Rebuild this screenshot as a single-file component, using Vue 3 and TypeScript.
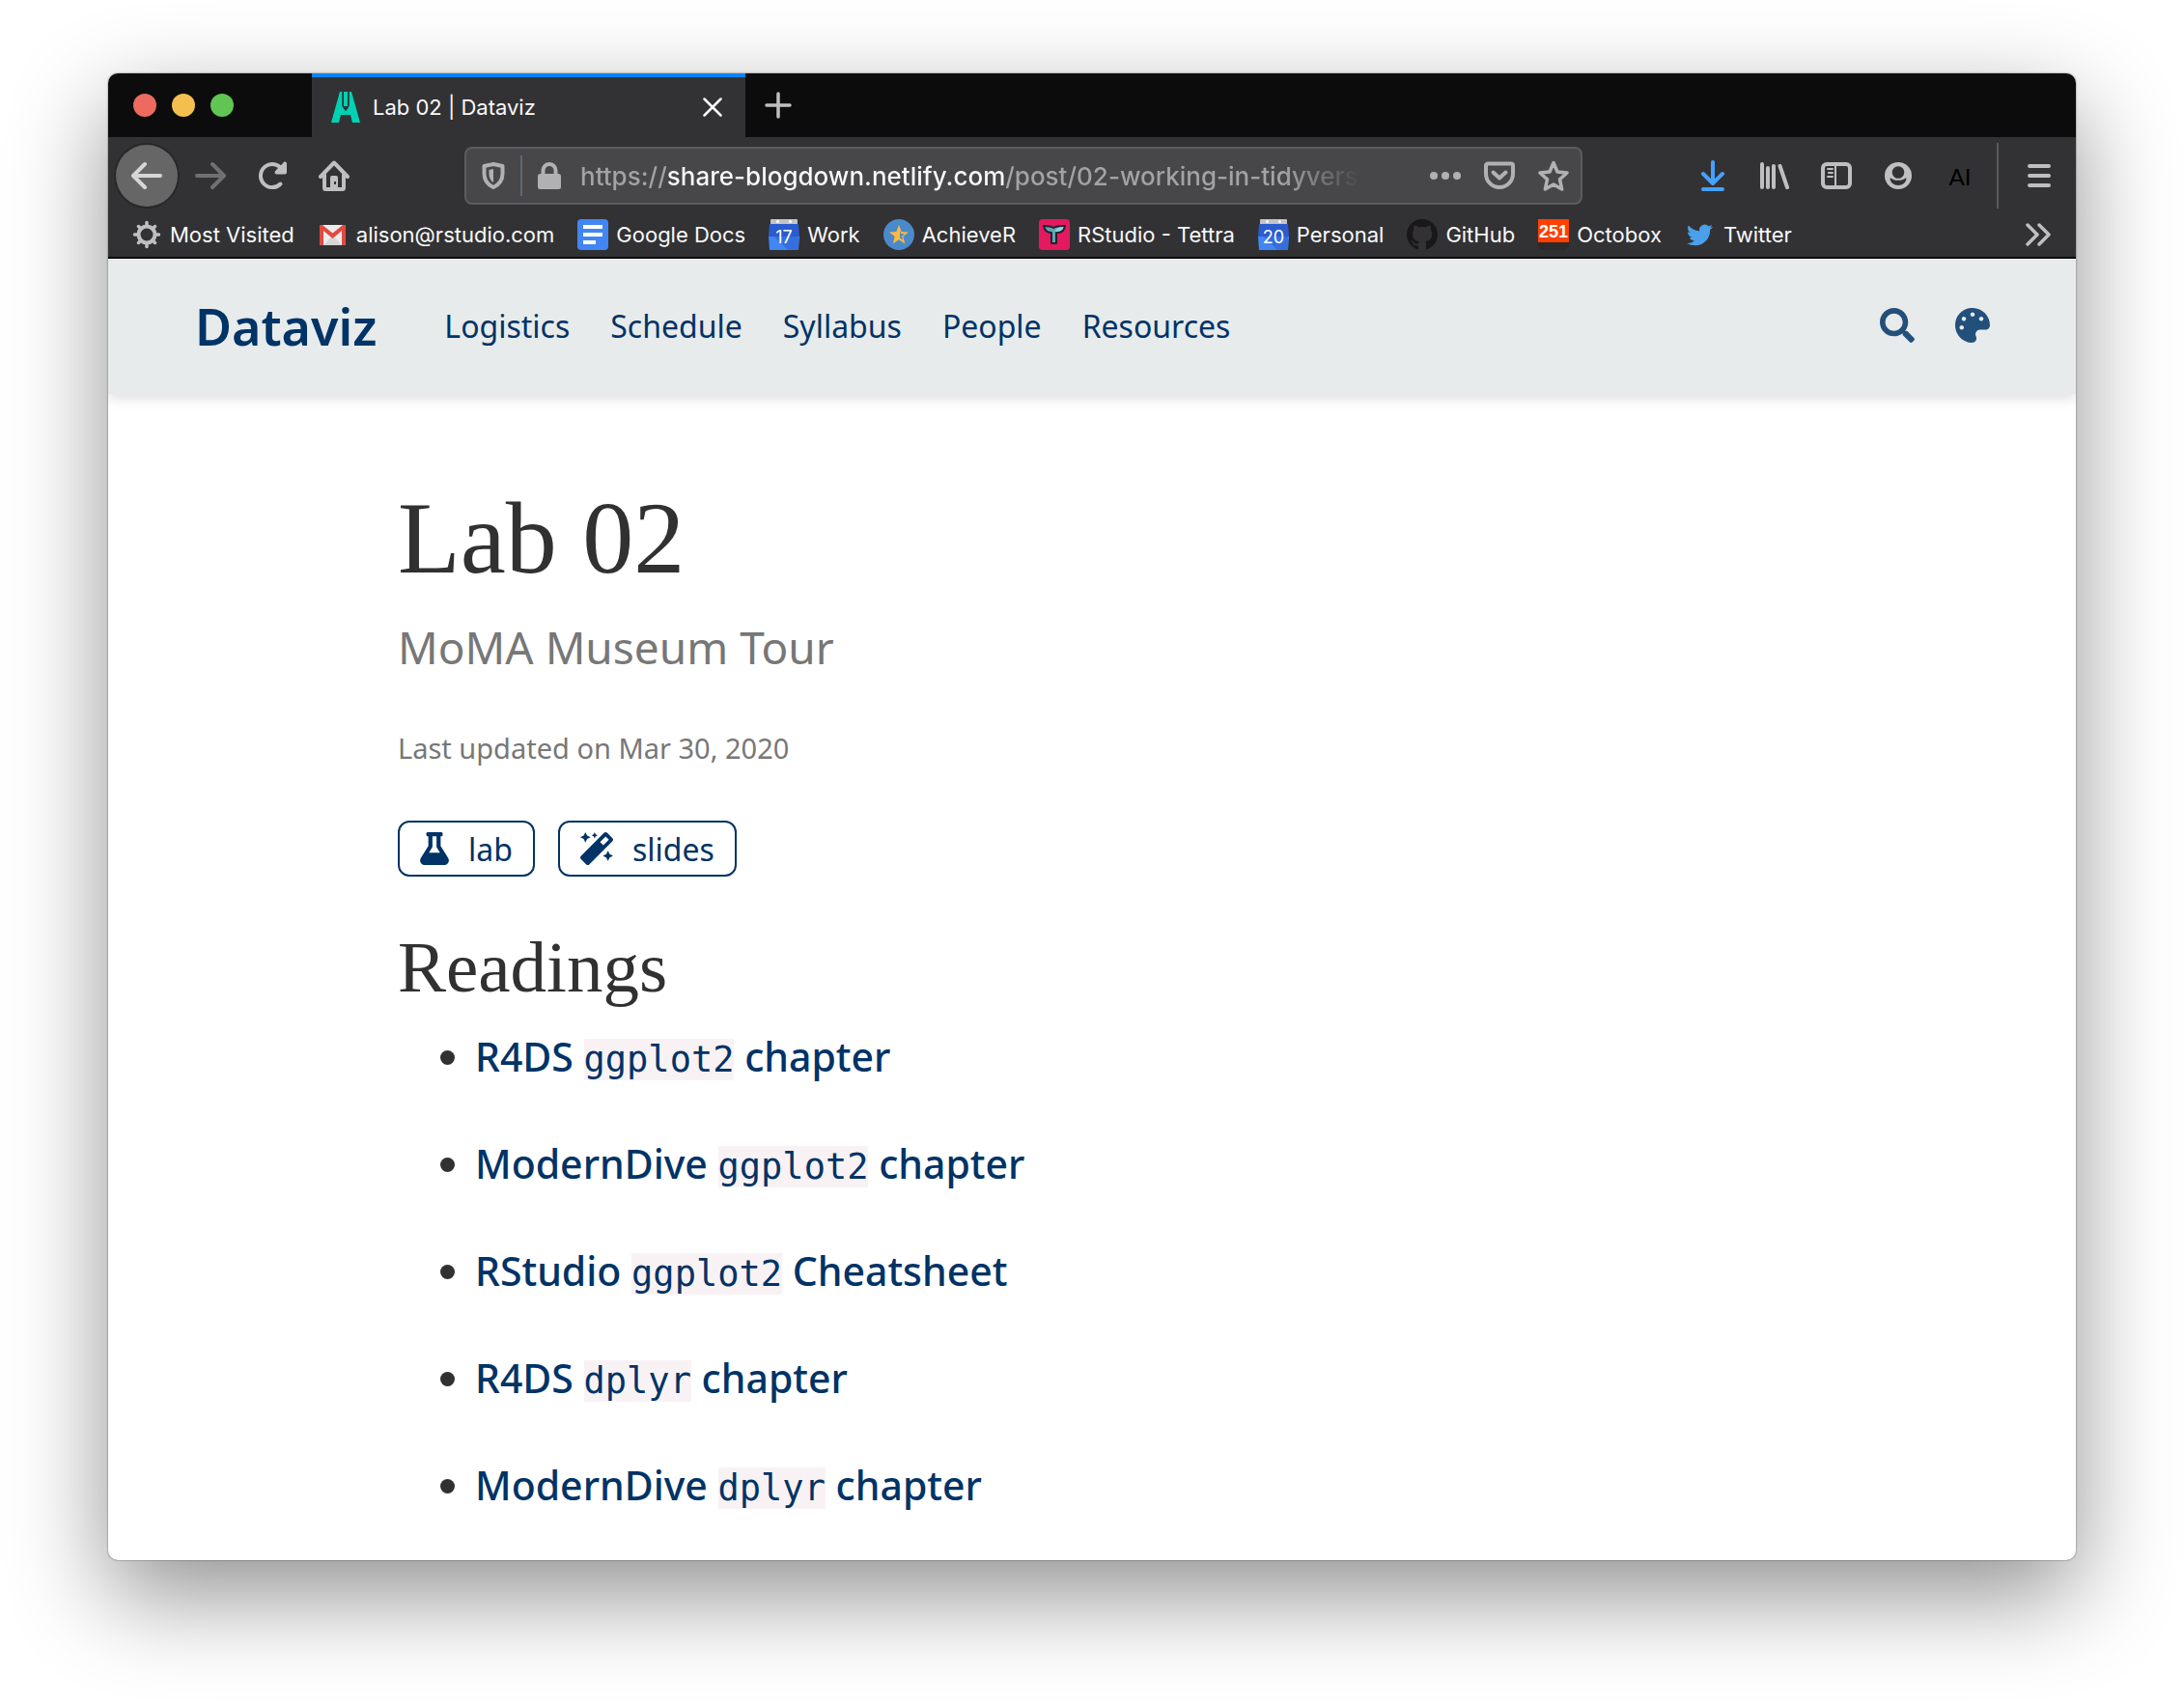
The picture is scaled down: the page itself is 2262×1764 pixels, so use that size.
<script setup lang="ts">
import { ref } from 'vue'

interface Bookmark {
  icon: string
  label: string
  badge?: string
}

interface Reading {
  before: string
  code: string
  after: string
}

const address = ref('https://share-blogdown.netlify.com/post/02-working-in-tidyverse/')

const bookmarks: Bookmark[] = [
  { icon: 'gear', label: 'Most Visited' },
  { icon: 'gmail', label: 'alison@rstudio.com' },
  { icon: 'docs', label: 'Google Docs' },
  { icon: 'calendar', label: 'Work', badge: '17' },
  { icon: 'achiever', label: 'AchieveR' },
  { icon: 'tettra', label: 'RStudio - Tettra' },
  { icon: 'calendar', label: 'Personal', badge: '20' },
  { icon: 'github', label: 'GitHub' },
  { icon: 'octobox', label: 'Octobox', badge: '251' },
  { icon: 'twitter', label: 'Twitter' },
]

const sections: string[] = ['Logistics', 'Schedule', 'Syllabus', 'People', 'Resources']

const readings: Reading[] = [
  { before: 'R4DS', code: 'ggplot2', after: 'chapter' },
  { before: 'ModernDive', code: 'ggplot2', after: 'chapter' },
  { before: 'RStudio', code: 'ggplot2', after: 'Cheatsheet' },
  { before: 'R4DS', code: 'dplyr', after: 'chapter' },
  { before: 'ModernDive', code: 'dplyr', after: 'chapter' },
]
</script>

<template>
  <div class="desktop">
    <div class="window">
      <div class="tabs">
        <div class="lights">
          <button class="light red" aria-label="Close window"></button>
          <button class="light yellow" aria-label="Minimise window"></button>
          <button class="light green" aria-label="Zoom window"></button>
        </div>
        <div class="tab">
          <svg class="favicon" viewBox="0 0 30 32" width="30" height="32">
            <path fill="#00d1b2" d="M9 0h2.500v15l3.500 5 3.500-5V0H21l9 32h-8l-2-8H10l-2 8H0z" />
            <path fill="#00d1b2" d="M13 0h4v15h-4z" />
            <path fill="#323234" d="M11.500 0h1.500v15h-1.500zM17 0h1.500v15H17zM12 16h6l-3 4z" />
          </svg>
          <span class="tab-title">Lab 02 | Dataviz</span>
          <button class="plain" aria-label="Close tab">
            <svg viewBox="0 0 20 20" width="20" height="20" fill="none" stroke="#f9f9fa" stroke-width="2.500" stroke-linecap="round">
              <path d="M1.500 1.500l17 17M18.500 1.500l-17 17" />
            </svg>
          </button>
        </div>
        <button class="plain new-tab" aria-label="New tab">
          <svg viewBox="0 0 28 28" width="28" height="28" fill="none" stroke="#bfbfc0" stroke-width="3.500" stroke-linecap="round">
            <path d="M14 2v24M2 14h24" />
          </svg>
        </button>
      </div>

      <div class="toolbar">
        <div class="group">
          <button class="tool back" aria-label="Back">
            <svg viewBox="0 0 32 32" width="32" height="32" fill="none" stroke="#d6d6d7" stroke-width="4" stroke-linecap="round" stroke-linejoin="round">
              <path d="M30 16H3M14 4L2 16l12 12" />
            </svg>
          </button>
          <button class="tool" aria-label="Forward">
            <svg viewBox="0 0 32 32" width="32" height="32" fill="none" stroke="#707072" stroke-width="4" stroke-linecap="round" stroke-linejoin="round">
              <path d="M2 16h27M18 4l12 12-12 12" />
            </svg>
          </button>
          <button class="tool" aria-label="Reload">
            <svg viewBox="0 0 32 32" width="32" height="32" fill="none" stroke="#bfbfc0" stroke-width="4" stroke-linecap="round" stroke-linejoin="round">
              <path d="M24.500 24.500a12 12 0 1 1 1.500-15" />
              <path d="M29 3.500v9h-8.500" />
              <path d="M22 11l6-6" />
            </svg>
          </button>
          <button class="tool" aria-label="Home">
            <svg viewBox="0 0 32 32" width="32" height="32" fill="none" stroke="#bfbfc0" stroke-width="4" stroke-linecap="round" stroke-linejoin="round">
              <path d="M2 17L16 2.500 30 17M6 15v13.500a1.500 1.500 0 0 0 1.500 1.500h17a1.500 1.500 0 0 0 1.500-1.500V15" />
              <path fill="#bfbfc0" stroke="none" d="M12 31V18a2 2 0 0 1 2-2h4a2 2 0 0 1 2 2v13z" />
              <path fill="#323234" stroke="none" d="M16 22h2v3h-2z" />
            </svg>
          </button>
        </div>

        <div class="urlbar">
          <svg viewBox="0 0 24 28" width="24" height="28">
            <path fill="none" stroke="#b1b1b3" stroke-width="4" stroke-linejoin="round" d="M12 2l9.500 2v8c0 6-3 11-9.500 14C5.500 23 2.500 18 2.500 12V4z" />
            <path fill="#b1b1b3" d="M12 7v14c-3-2-4.500-5-4.500-9V8z" />
          </svg>
          <span class="url-rule"></span>
          <svg viewBox="0 0 24 28" width="24" height="28">
            <rect y="12" width="24" height="16" rx="2.500" fill="#b1b1b3" />
            <path fill="none" stroke="#b1b1b3" stroke-width="4" d="M5.500 14V8.500a6.500 6.500 0 0 1 13 0V14" />
          </svg>
          <input v-model="address" class="address" type="text" aria-label="Address" spellcheck="false" />
          <div class="page-actions">
            <button class="plain" aria-label="Page actions">
              <svg viewBox="0 0 32 32" width="32" height="32" fill="#b1b1b3">
                <circle cx="4" cy="16" r="4" /><circle cx="16" cy="16" r="4" /><circle cx="28" cy="16" r="4" />
              </svg>
            </button>
            <button class="plain" aria-label="Save to Pocket">
              <svg viewBox="0 0 32 32" width="32" height="32" fill="none" stroke="#b1b1b3" stroke-width="4" stroke-linecap="round" stroke-linejoin="round">
                <path d="M4 3.500h24a2 2 0 0 1 2 2V14a14 14 0 0 1-28 0V5.500a2 2 0 0 1 2-2z" />
                <path d="M9.500 12.500L16 18.500l6.500-6" />
              </svg>
            </button>
            <button class="plain" aria-label="Bookmark this page">
              <svg viewBox="0 0 32 32" width="32" height="32" fill="none" stroke="#b1b1b3" stroke-width="3.500" stroke-linejoin="round">
                <path d="M16 2.500l4 9.500 10 1-7.500 6.800 2.200 10.200L16 25l-8.700 5 2.200-10.200L2 13l10-1z" />
              </svg>
            </button>
          </div>
        </div>

        <div class="group">
          <button class="tool" aria-label="Downloads">
            <svg viewBox="0 0 24 32" width="24" height="32" fill="none" stroke="#45a1ff" stroke-width="4" stroke-linecap="round" stroke-linejoin="round">
              <path d="M12 2v21M2 14l10 10 10-10M2 30h20" />
            </svg>
          </button>
          <button class="tool" aria-label="Library">
            <svg viewBox="0 0 30 28" width="30" height="28" fill="none" stroke="#bfbfc0" stroke-width="4" stroke-linecap="round">
              <path d="M2 2v24M8 6v20M14 4v22M20.500 4l7.500 22" />
            </svg>
          </button>
          <button class="tool" aria-label="Sidebars">
            <svg viewBox="0 0 32 28" width="32" height="28" fill="none" stroke="#bfbfc0">
              <rect x="2" y="2" width="28" height="24" rx="4" stroke-width="4" />
              <path stroke-width="2" d="M15 3v22M7 7h5M8 11h4M7 15h5" stroke-linecap="round" />
            </svg>
          </button>
          <button class="tool" aria-label="Account">
            <svg viewBox="0 0 28 28" width="28" height="28">
              <circle cx="14" cy="14" r="14" fill="#bfbfc0" />
              <circle cx="14" cy="10.500" r="6.300" fill="#323234" />
              <path fill="#323234" d="M5.500 16.500c2 0 2.500 2.300 8.500 2.300s6.500-2.300 8.500-2.300c0 4.500-4 7.500-8.500 7.500s-8.500-3-8.500-7.500z" />
            </svg>
          </button>
          <button class="tool initials">AI</button>
          <span class="tool-rule"></span>
          <button class="tool" aria-label="Menu">
            <svg viewBox="0 0 24 24" width="24" height="24" fill="none" stroke="#bfbfc0" stroke-width="4" stroke-linecap="round">
              <path d="M2 2h20M2 12h20M2 22h20" />
            </svg>
          </button>
        </div>
      </div>

      <div class="bookmarks">
        <a v-for="mark in bookmarks" :key="mark.label" class="bookmark" href="#">
          <svg viewBox="0 0 32 32" width="32" height="32">
            <g v-if="mark.icon === 'gear'" fill="none" stroke="#bfbfc0" stroke-width="4" stroke-linecap="round">
              <circle cx="16" cy="16" r="8.500" />
              <path stroke-width="3.500" d="M16 7V3.500M16 25v3.500M7 16H3.500M25 16h3.500M9.500 9.500L7.500 7.500M22.500 22.500l2 2M9.500 22.500l-2 2M22.500 9.500l2-2" />
            </g>
            <g v-else-if="mark.icon === 'gmail'">
              <rect x="2" y="6" width="27" height="21" rx="2" fill="#ececec" />
              <path fill="#d6d6d6" d="M6 27l9.500-10L25 27z" />
              <path fill="#e04a3f" d="M2 8v17a2 2 0 0 0 2 2h2V12l9.500 8L25 12v15h2a2 2 0 0 0 2-2V8c0-2-2-2.500-3.500-1.500l-10 8-10-8C4 5.500 2 6 2 8z" />
            </g>
            <g v-else-if="mark.icon === 'docs'">
              <rect width="32" height="32" rx="4" fill="#4285f4" />
              <path fill="#fff" d="M6 6h20v4H6zM6 14h20v4H6zM6 22h13v4H6z" />
            </g>
            <g v-else-if="mark.icon === 'calendar'">
              <rect x="2" width="28" height="8" rx="1" fill="#c3c3c3" />
              <circle cx="9.500" cy="2.500" r="1.500" fill="#fff" /><circle cx="22.500" cy="2.500" r="1.500" fill="#fff" />
              <path fill="#2a5bcf" d="M1 5h30l1 13H0z" />
              <path fill="#4285f4" d="M0 18h32l-1 14H1z" />
              <path fill="#356fdc" d="M6 18l14 14h11V18z" />
              <text class="calendar-day" x="16" y="25" text-anchor="middle">{{ mark.badge }}</text>
            </g>
            <g v-else-if="mark.icon === 'achiever'">
              <circle cx="16" cy="16" r="16" fill="#4a8acb" />
              <path fill="#fdb940" d="M16 6l2.700 7 7.300.400-5.700 4.600 2 7.500L16 21.300 9.700 25.500l2-7.500L6 13.400l7.300-.400z" />
              <path fill="#4a8acb" d="M17 11.500l1 3.500 4 .300-3 2.500 1 3.700-3-2z" />
            </g>
            <g v-else-if="mark.icon === 'tettra'">
              <rect width="32" height="32" rx="4" fill="#e5195f" />
              <path fill="#5fa8b5" stroke="#22222c" stroke-width="2" stroke-linejoin="round" d="M5 7c3 0 7 0 10 2 3-2 7-2 12-2-1 5-3 7-9 7v11h-5V14C9 14 6 12 5 7z" />
              <path fill="#8fd3dc" d="M17 13c0-3 3-5 8.500-5-1 4-4 5-8.500 5z" />
            </g>
            <path v-else-if="mark.icon === 'github'" fill="#191717" transform="scale(2)" d="M8 0C3.580 0 0 3.580 0 8c0 3.540 2.290 6.530 5.470 7.590.4.070.55-.170.55-.380 0-.190-.010-.820-.010-1.490-2.010.370-2.530-.490-2.690-.940-.090-.230-.480-.940-.820-1.130-.280-.150-.680-.520-.010-.530.630-.010 1.080.580 1.230.820.720 1.210 1.870.870 2.330.660.070-.520.280-.870.510-1.070-1.780-.200-3.640-.890-3.640-3.950 0-.870.310-1.590.820-2.150-.080-.200-.360-1.020.080-2.120 0 0 .670-.210 2.200.820.640-.180 1.320-.270 2-.270s1.360.090 2 .270c1.530-1.040 2.200-.820 2.200-.820.440 1.100.160 1.920.080 2.120.510.560.820 1.270.820 2.150 0 3.070-1.870 3.750-3.650 3.950.290.250.540.730.540 1.480 0 1.070-.010 1.930-.010 2.200 0 .210.150.460.550.380A8.010 8.010 0 0016 8c0-4.420-3.580-8-8-8z" />
            <g v-else-if="mark.icon === 'octobox'">
              <rect y="8" width="32" height="24" rx="5" fill="#2b2a2b" />
              <rect width="32" height="24" fill="#ff4000" />
              <text class="octobox-count" x="16" y="19" text-anchor="middle">{{ mark.badge }}</text>
            </g>
            <path v-else fill="#4aa0eb" transform="translate(2 3) scale(1.120)" d="M23.953 4.570a10 10 0 01-2.825.775 4.958 4.958 0 002.163-2.723c-.951.555-2.005.959-3.127 1.184a4.920 4.920 0 00-8.384 4.482C7.690 8.095 4.067 6.130 1.640 3.162a4.822 4.822 0 00-.666 2.475c0 1.710.870 3.213 2.188 4.096a4.904 4.904 0 01-2.228-.616v.060a4.923 4.923 0 003.946 4.827 4.996 4.996 0 01-2.212.085 4.936 4.936 0 004.604 3.417 9.867 9.867 0 01-6.102 2.105c-.390 0-.779-.023-1.170-.067a13.995 13.995 0 007.557 2.209c9.053 0 13.998-7.496 13.998-13.985 0-.210 0-.420-.015-.630A9.935 9.935 0 0024 4.590z" />
          </svg>
          <span>{{ mark.label }}</span>
        </a>
        <button class="plain overflow" aria-label="More bookmarks">
          <svg viewBox="0 0 26 24" width="26" height="24" fill="none" stroke="#bfbfc0" stroke-width="3.500" stroke-linecap="round" stroke-linejoin="round">
            <path d="M2 2l10 10L2 22M14 2l10 10-10 10" />
          </svg>
        </button>
      </div>

      <div class="page">
        <header class="site-header">
          <a class="brand" href="#">Dataviz</a>
          <nav class="sections">
            <a v-for="section in sections" :key="section" href="#">{{ section }}</a>
          </nav>
          <div class="site-tools">
            <button class="plain" aria-label="Search">
              <svg viewBox="0 0 512 512" width="36" height="36" fill="#234f7b">
                <path d="M505 442.700L405.300 343c-4.500-4.500-10.600-7-17-7H372c27.600-35.300 44-79.700 44-128C416 93.100 322.900 0 208 0S0 93.100 0 208s93.100 208 208 208c48.300 0 92.700-16.400 128-44v16.300c0 6.400 2.500 12.500 7 17l99.700 99.700c9.400 9.400 24.600 9.400 33.900 0l28.300-28.300c9.400-9.400 9.400-24.600.1-34zM208 336c-70.700 0-128-57.200-128-128 0-70.700 57.200-128 128-128 70.700 0 128 57.200 128 128 0 70.700-57.200 128-128 128z" />
              </svg>
            </button>
            <button class="plain" aria-label="Theme">
              <svg viewBox="0 0 512 512" width="36" height="36" fill="#234f7b">
                <path d="M204.300 5C104.900 24.400 24.800 104.300 5.200 203.400c-37 187 131.700 326.400 258.800 306.700 41.200-6.400 61.400-54.600 42.500-91.700-23.100-45.400 9.900-98.400 60.900-98.400h79.700c35.800 0 64.800-29.600 64.900-65.300C511.500 97.100 368.100-26.900 204.300 5zM96 320c-17.700 0-32-14.300-32-32s14.300-32 32-32 32 14.300 32 32-14.300 32-32 32zm32-128c-17.700 0-32-14.300-32-32s14.300-32 32-32 32 14.300 32 32-14.300 32-32 32zm128-64c-17.700 0-32-14.300-32-32s14.300-32 32-32 32 14.300 32 32-14.300 32-32 32zm128 64c-17.700 0-32-14.300-32-32s14.300-32 32-32 32 14.300 32 32-14.300 32-32 32z" />
              </svg>
            </button>
          </div>
        </header>

        <main class="article">
          <h1>Lab 02</h1>
          <p class="subtitle">MoMA Museum Tour</p>
          <p class="meta">Last updated on Mar 30, 2020</p>
          <div class="links">
            <a class="link-button" href="#">
              <svg viewBox="0 0 448 512" width="30" height="34" fill="#003366">
                <path d="M437.200 403.500L320 215V64h8c13.300 0 24-10.700 24-24V24c0-13.300-10.700-24-24-24H120c-13.300 0-24 10.700-24 24v16c0 13.300 10.700 24 24 24h8v151L10.800 403.500C-18.500 450.600 15.300 512 70.900 512h306.200c55.700 0 89.400-61.500 60.100-108.500zM137.900 320l48.200-77.600c3.700-5.200 5.800-11.600 5.800-18.400V64h64v160c0 6.900 2.200 13.200 5.800 18.400l48.200 77.600h-172z" />
              </svg>
              <span>lab</span>
            </a>
            <a class="link-button" href="#">
              <svg viewBox="0 0 512 512" width="34" height="34" fill="#003366">
                <path d="M224 96l16-32 32-16-32-16-16-32-16 32-32 16 32 16 16 32zM80 160l26.660-53.330L160 80l-53.340-26.670L80 0 53.340 53.330 0 80l53.340 26.670L80 160zm352 128l-26.660 53.330L352 368l53.340 26.670L432 448l26.660-53.330L512 368l-53.340-26.670L432 288zm70.620-193.770L417.770 9.380C411.530 3.120 403.340 0 395.150 0c-8.190 0-16.380 3.120-22.630 9.380L9.380 372.520c-12.500 12.500-12.500 32.760 0 45.250l84.850 84.850c6.250 6.250 14.440 9.370 22.620 9.370 8.190 0 16.380-3.120 22.630-9.370l363.140-363.150c12.500-12.480 12.500-32.750 0-45.240zM359.450 203.460l-50.910-50.910 86.600-86.600 50.910 50.910-86.600 86.600z" />
              </svg>
              <span>slides</span>
            </a>
          </div>
          <h2>Readings</h2>
          <ul class="readings">
            <li v-for="reading in readings" :key="reading.before + reading.code">
              <a href="#">{{ reading.before }} <code>{{ reading.code }}</code> {{ reading.after }}</a>
            </li>
          </ul>
        </main>
      </div>
    </div>
  </div>
</template>

<style>
body {
  background: #fff;
}
</style>

<style scoped>
.desktop {
  padding: 76px 112px 148px;
  overflow: hidden;
}

.window {
  border-radius: 10px;
  background: #fff;
  box-shadow: 0 0 2px rgba(0, 0, 0, 0.6), 0 36px 100px rgba(0, 0, 0, 0.44);
  overflow: hidden;
  font-family: Inter, Roboto, sans-serif;
}

a {
  color: inherit;
  text-decoration: none;
}

svg {
  display: block;
  flex: none;
}

button {
  margin: 0;
  padding: 0;
  border: 0;
  background: none;
  font: inherit;
}

.plain {
  display: flex;
}

.tabs {
  display: flex;
  align-items: center;
  height: 66px;
  background: #0c0c0d;
}

.lights {
  display: flex;
  gap: 16px;
  width: 211px;
  padding-left: 26px;
  box-sizing: border-box;
}

.light {
  width: 24px;
  height: 24px;
  border-radius: 50%;
}

.red {
  background: #ed6a5e;
}

.yellow {
  background: #f5bf4f;
}

.green {
  background: #61c554;
}

.tab {
  display: flex;
  align-items: center;
  gap: 13px;
  width: 449px;
  height: 66px;
  padding: 0 24px 0 20px;
  box-sizing: border-box;
  border-top: 4px solid #0a84ff;
  background: #323234;
}

.tab-title {
  flex: 1;
  color: #f9f9fa;
  font-size: 22px;
}

.new-tab {
  margin-left: 20px;
}

.toolbar {
  display: flex;
  align-items: center;
  height: 80px;
  padding: 0 6px 0 8px;
  background: #323234;
}

.group {
  display: flex;
  align-items: center;
}

.tool {
  display: flex;
  align-items: center;
  justify-content: center;
  width: 64px;
  height: 64px;
}

.back {
  margin-right: 2px;
  border-radius: 50%;
  background: #666667;
  box-shadow: 0 0 0 2px #28282a;
}

.initials {
  color: #000;
  font-family: Lato, sans-serif;
  font-size: 24px;
}

.tool-rule {
  width: 2px;
  height: 68px;
  margin: 0 10px 0 6px;
  background: #5c5c5e;
}

.urlbar {
  display: flex;
  flex: 1;
  align-items: center;
  height: 60px;
  margin: 0 103px;
  padding: 0 12px 0 16px;
  box-sizing: border-box;
  border: 2px solid #5c5c5e;
  border-radius: 8px;
  background: #474749;
}

.url-rule {
  width: 2px;
  height: 42px;
  margin: 0 16px;
  background: #5f6670;
}

.address {
  flex: 1;
  min-width: 0;
  height: 48px;
  margin-left: 20px;
  padding: 0;
  border: 0;
  outline: 0;
  background: linear-gradient(90deg, #a3a3a4 0 90px, #f9f9fa 90px 441px, #a3a3a4 441px 730px, transparent 808px);
  background-clip: text;
  -webkit-background-clip: text;
  color: transparent;
  font-family: inherit;
  font-size: 26px;
  font-weight: 500;
}

.page-actions {
  display: flex;
  gap: 24px;
}

.bookmarks {
  display: flex;
  align-items: center;
  gap: 24px;
  height: 46px;
  padding: 0 26px 2px 24px;
  box-sizing: border-box;
  border-bottom: 2px solid #0c0c0d;
  background: #323234;
  color: #f9f9fa;
  font-size: 22px;
}

.bookmark {
  display: flex;
  align-items: center;
  gap: 8px;
  white-space: nowrap;
}

.calendar-day {
  fill: #fff;
  font-size: 18px;
}

.octobox-count {
  fill: #fff;
  font-family: "Liberation Sans", sans-serif;
  font-size: 18px;
  font-weight: 700;
}

.overflow {
  margin-left: auto;
}

.page {
  color: #313131;
  font-family: "Noto Sans", "Open Sans", sans-serif;
}

.site-header {
  display: flex;
  align-items: center;
  height: 140px;
  padding: 0 89px 2px 90px;
  box-sizing: border-box;
  background: #e7ebeb;
  box-shadow: 0 4px 14px rgba(0, 0, 0, 0.14);
  color: #003366;
}

.brand {
  font-size: 52px;
  font-weight: 600;
}

.sections {
  display: flex;
  gap: 42px;
  margin-left: 70px;
  font-size: 32px;
}

.site-tools {
  display: flex;
  gap: 42px;
  margin-left: auto;
}

.article {
  padding: 80px 300px 22px;
}

h1 {
  margin: 0;
  font-family: "Liberation Serif", serif;
  font-size: 106px;
  font-weight: 400;
  line-height: 140px;
}

.subtitle {
  margin: 12px 0 0;
  color: #777;
  font-size: 46px;
  line-height: 60px;
}

.meta {
  margin: 55px 0 0;
  color: #777;
  font-size: 29px;
  line-height: 40px;
}

.links {
  display: flex;
  gap: 24px;
  margin-top: 55px;
}

.link-button {
  display: flex;
  align-items: center;
  gap: 20px;
  height: 58px;
  padding: 0 21px;
  box-sizing: border-box;
  border: 2px solid #003366;
  border-radius: 12px;
  color: #003366;
  font-size: 32px;
}

h2 {
  margin: 57px 0 0;
  font-family: "Liberation Serif", serif;
  font-size: 75px;
  font-weight: 400;
  line-height: 74px;
}

.readings {
  margin: 0;
  padding-left: 80px;
  font-size: 41px;
  font-weight: 500;
  line-height: 111px;
}

.readings a {
  color: #003366;
}

code {
  background: #f9f2f4;
  font-family: "DejaVu Sans Mono", monospace;
  font-size: 37px;
  font-weight: 400;
  line-height: 1;
}
</style>
